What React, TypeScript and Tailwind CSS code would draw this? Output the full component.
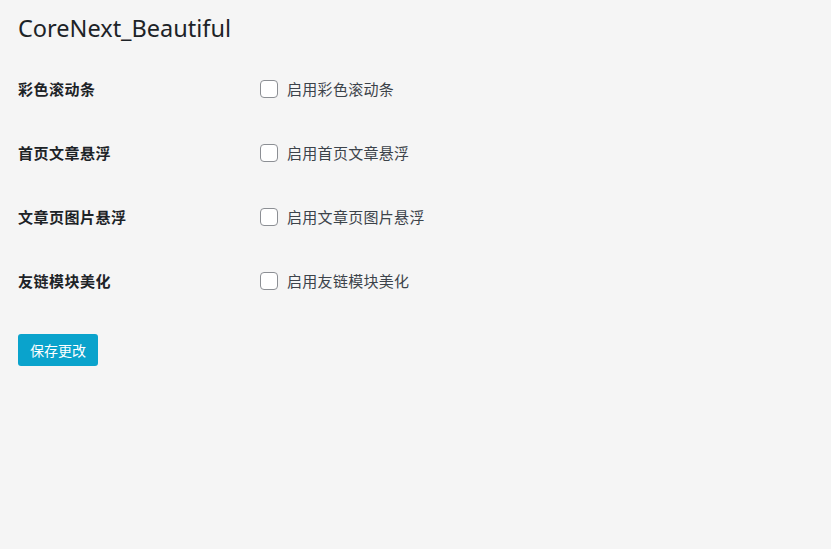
import React from "react";

const rows = [
  ["彩色滚动条", "启用彩色滚动条"],
  ["首页文章悬浮", "启用首页文章悬浮"],
  ["文章页图片悬浮", "启用文章页图片悬浮"],
  ["友链模块美化", "启用友链模块美化"],
];

export default function App() {
  return (
    <div
      className="w-[831px] h-[549px] bg-[#f5f5f5] text-[#1d2327] px-[18px] overflow-hidden"
      style={{ fontFamily: '"Noto Sans", "Noto Sans CJK SC", sans-serif' }}
    >
      <h1 className="text-[23.5px] font-normal leading-[29px] pt-[14px] text-[#1d2327]">CoreNext_Beautiful</h1>
      <div className="mt-[14px] flex flex-col">
        {rows.map(([label, text]) => (
          <div key={label} className="h-[64px] flex items-center">
            <div className="w-[242px] text-[15px] font-bold tracking-[0.5px]">{label}</div>
            <label className="flex items-center gap-[9px] text-[15px] text-[#3c434a]">
              <span className="w-[18px] h-[18px] rounded-[4px] border border-[#8c8f94] bg-white" />
              <span className="tracking-[0.3px]">{text}</span>
            </label>
          </div>
        ))}
      </div>
      <button className="mt-[21px] h-[32px] px-[12px] rounded-[3px] bg-[#0aa3cc] text-white text-[14px]">
        保存更改
      </button>
    </div>
  );
}
